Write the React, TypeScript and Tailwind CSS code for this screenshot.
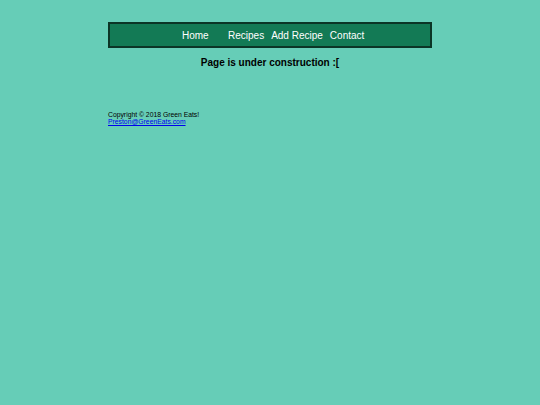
import React from 'react';

const App: React.FC = () => {
  return (
    <div className="min-h-[405px] w-full bg-[#66cdb7] pt-[22px] font-['Liberation_Sans',Arial,sans-serif]">
      <div className="mx-auto w-[324px]">
        <nav className="flex h-[26px] items-center border-[2px] border-[#0b3526] bg-[#137a55] pl-[72px] text-[10px] text-white">
          <a className="w-[46px]">Home</a>
          <a className="mr-[7px]">Recipes</a>
          <a className="mr-[7px]">Add Recipe</a>
          <a>Contact</a>
        </nav>
        <h1 className="mt-[8px] text-center text-[10px] font-bold leading-[14px] text-black">
          Page is under construction :[
        </h1>
        <footer className="mt-[41px] text-[6.8px] leading-[7px] text-black">
          <p>Copyright © 2018 Green Eats!</p>
          <a href="#" className="text-[#0000ee] underline">Preston@GreenEats.com</a>
        </footer>
      </div>
    </div>
  );
};

export default App;
